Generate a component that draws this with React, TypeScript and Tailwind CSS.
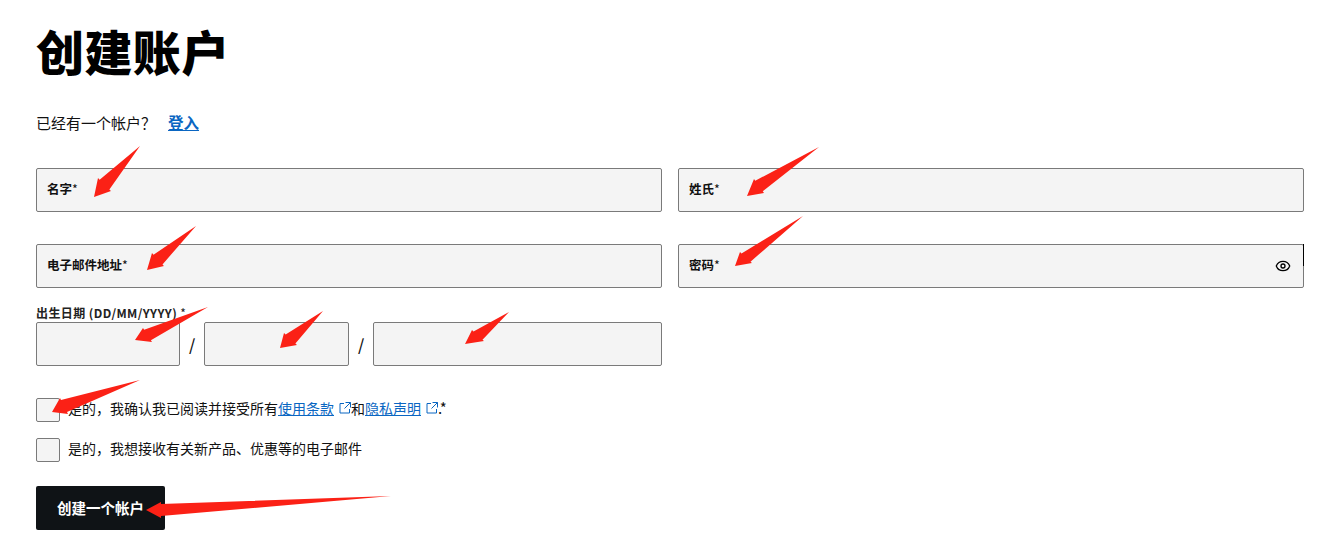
import { Eye } from "lucide-react";

const font = { fontFamily: '"Noto Sans CJK SC", "Liberation Sans", sans-serif' };

type Pt = [number, number];

// tail, tip and the two barbs of each red annotation arrow
const arrows: { tail: Pt; tip: Pt; a: Pt; b: Pt }[] = [
  { tail: [140, 146], tip: [94, 197], a: [98, 178], b: [111, 191] },
  { tail: [819, 147], tip: [747, 196], a: [754, 179], b: [764, 193] },
  { tail: [196, 226], tip: [147, 270], a: [152, 253], b: [164, 266] },
  { tail: [803, 216], tip: [735, 266], a: [740, 252], b: [752, 263] },
  { tail: [208, 307], tip: [135, 340], a: [143, 328], b: [152, 342] },
  { tail: [323, 311], tip: [280, 348], a: [284, 333], b: [297, 345] },
  { tail: [509, 312], tip: [465, 344], a: [472, 330], b: [484, 341] },
  { tail: [140, 380], tip: [52, 412], a: [60, 398], b: [68, 414] },
  { tail: [391, 496], tip: [146, 510], a: [161, 502], b: [161, 518] },
];

function arrowPoints({ tail, tip, a, b }: { tail: Pt; tip: Pt; a: Pt; b: Pt }) {
  const mid: Pt = [(a[0] + b[0]) / 2, (a[1] + b[1]) / 2];
  const notch = (p: Pt): Pt => [p[0] + (mid[0] - p[0]) * 0.25, p[1] + (mid[1] - p[1]) * 0.25];
  return [tail, notch(a), a, tip, b, notch(b)].map((p) => p.join(",")).join(" ");
}

function Field({ label, children }: { label: string; children?: React.ReactNode }) {
  return (
    <div className="relative flex h-[44px] items-center rounded-[2px] border border-[#7a7a7a] bg-[#f4f4f4] pl-[10px] pr-[12px]">
      <span className="pb-[2px] text-[12.5px] font-bold text-[#111]">
        {label}
        <span className="font-normal">*</span>
      </span>
      {children}
    </div>
  );
}

function DateBox({ className }: { className: string }) {
  return <div className={`h-[44px] rounded-[2px] border border-[#7a7a7a] bg-[#f4f4f4] ${className}`} />;
}

function ExternalIcon() {
  return (
    <svg width="12" height="12" viewBox="0 0 12 12" fill="none" stroke="#0a66c2" strokeWidth="1" className="ml-[5px] mb-[5px] inline-block">
      <path d="M5 1.5H1V11H10.5V7M6.5 .5H11.5V5.5M11.5 .5L5.5 6.5" />
    </svg>
  );
}

export default function App() {
  return (
    <div style={font} className="relative h-[550px] w-full overflow-hidden bg-white pl-[36px] pr-[25px] text-[#111]">
      <h1 className="h-[110px] pt-[20px] text-[48px] leading-[60px] font-black tracking-[0.4px] text-black">创建账户</h1>

      <p className="flex h-[26px] items-center text-[15px]">
        {"已经有一个帐户\uFF1F"}
        <a className="ml-[12px] text-[15.5px] font-bold text-[#0a66c2] underline">登入</a>
      </p>

      <div className="mt-[32px] grid grid-cols-2 gap-x-4 gap-y-8">
        <Field label="名字" />
        <Field label="姓氏" />
        <Field label="电子邮件地址" />
        <Field label="密码">
          <Eye size={16} strokeWidth={2} className="ml-auto mr-0 text-black" />
          <div className="absolute right-[-1px] top-[-1px] h-[22px] w-px bg-black" />
        </Field>
      </div>

      <div className="mt-[16px] h-[18px] text-[12px] leading-[18px] font-bold tracking-[0.4px] text-[#222]">
        出生日期 (DD/MM/YYYY) <span className="font-normal">*</span>
      </div>
      <div className="flex w-[626px] items-center">
        <DateBox className="w-[144px]" />
        <span className="w-[24px] text-center text-[16px] font-medium">/</span>
        <DateBox className="w-[145px]" />
        <span className="w-[24px] text-center text-[16px] font-medium">/</span>
        <DateBox className="flex-1" />
      </div>

      <div className="mt-[32px] flex h-[24px] items-center text-[14px]">
        <div className="h-[24px] w-[24px] rounded-[2px] border border-[#7a7a7a] bg-[#f4f4f4]" />
        <span className="ml-[8px] mt-[-4px]">{"是的\uFF0C我确认我已阅读并接受所有"}</span>
        <a className="mt-[-4px] text-[#0a66c2] underline">使用条款</a>
        <ExternalIcon />
        <span className="mt-[-4px]">和</span>
        <a className="mt-[-4px] text-[#0a66c2] underline">隐私声明</a>
        <ExternalIcon />
        <span className="mt-[-4px] text-[15px]">.*</span>
      </div>

      <div className="mt-[16px] flex h-[24px] items-center text-[14px]">
        <div className="h-[24px] w-[24px] rounded-[2px] border border-[#7a7a7a] bg-[#f4f4f4]" />
        <span className="ml-[8px] mt-[-4px]">{"是的\uFF0C我想接收有关新产品、优惠等的电子邮件"}</span>
      </div>

      <button className="mt-[24px] flex h-[44px] w-[129px] items-center justify-center rounded-[2px] bg-[#0f1316] text-[14.5px] font-bold text-white">
        创建一个帐户
      </button>

      {/* red annotation arrows drawn over the form */}
      <svg className="pointer-events-none absolute left-0 top-0" width="1329" height="550">
        {arrows.map((arrow, i) => (
          <polygon key={i} points={arrowPoints(arrow)} fill="#fb2116" />
        ))}
      </svg>
    </div>
  );
}
